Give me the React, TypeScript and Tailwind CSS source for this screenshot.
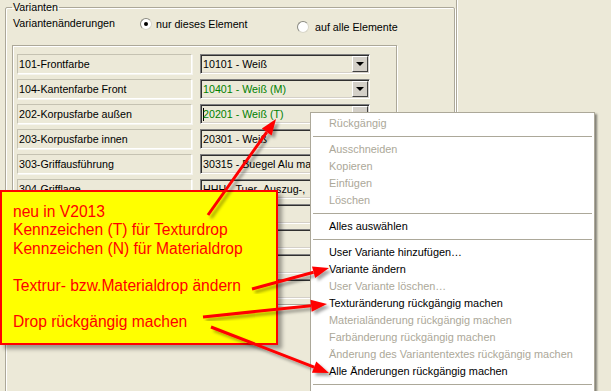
import React from "react";

type Row = { label: string; value: string; green?: boolean; caret?: boolean };

const ROWS: Row[] = [
  { label: "101-Frontfarbe", value: "10101 - Weiß" },
  { label: "104-Kantenfarbe Front", value: "10401 - Weiß (M)", green: true },
  { label: "202-Korpusfarbe außen", value: "20201 - Weiß (T)", green: true, caret: true },
  { label: "203-Korpusfarbe innen", value: "20301 - Weiß" },
  { label: "303-Griffausführung", value: "30315 - Buegel Alu ma" },
  { label: "304-Grifflage", value: "HHH - Tuer- Auszug-," },
  { label: "", value: "" },
  { label: "", value: "" },
  { label: "", value: "" },
  { label: "", value: "" },
];

// null = separator
const MENU: ({ text: string; off?: boolean } | null)[] = [
  { text: "Rückgängig", off: true },
  null,
  { text: "Ausschneiden", off: true },
  { text: "Kopieren", off: true },
  { text: "Einfügen", off: true },
  { text: "Löschen", off: true },
  null,
  { text: "Alles auswählen" },
  null,
  { text: "User Variante hinzufügen…" },
  { text: "Variante ändern" },
  { text: "User Variante löschen…", off: true },
  { text: "Texturänderung rückgängig machen" },
  { text: "Materialänderung rückgängig machen", off: true },
  { text: "Farbänderung rückgängig machen", off: true },
  { text: "Änderung des Variantentextes rückgängig machen", off: true },
  { text: "Alle Änderungen rückgängig machen" },
  null,
];

const ARROWS = [
  [208, 215, 276, 119],
  [252, 289, 329, 268],
  [203, 317, 327, 304],
  [211, 327, 329, 373],
];

function Radio({ checked }: { checked?: boolean }) {
  return (
    <span className="flex h-[12px] w-[12px] shrink-0 items-center justify-center rounded-full border border-[#8a8a80] border-b-[#d8d6c8] border-r-[#d8d6c8] bg-white">
      {checked && <span className="h-[4px] w-[4px] rounded-full bg-black" />}
    </span>
  );
}

function Combo({ row }: { row: Row }) {
  return (
    <div className="flex h-[20px] w-[170px] border border-[#808080] border-b-white border-r-white shadow-[inset_1px_1px_0_#303030,inset_-1px_-1px_0_#d4d0c8]">
      <div
        className={
          "flex flex-1 items-center overflow-hidden whitespace-nowrap pl-[2px] " +
          (row.green ? "text-[#008000]" : "text-black")
        }
      >
        {row.caret && <span className="mr-[-1px] h-[13px] w-px bg-black" />}
        {row.value}
      </div>
      <div className="my-px mr-px flex w-[16px] items-center justify-center border border-white border-b-[#404040] border-r-[#404040] bg-[#d4d0c8]">
        <span className="h-0 w-0 border-x-[4px] border-t-[4px] border-x-transparent border-t-black" />
      </div>
    </div>
  );
}

function Arrow({ a }: { a: number[] }) {
  const [x1, y1, x2, y2] = a;
  const ang = Math.atan2(y2 - y1, x2 - x1);
  const len = 16;
  const half = 6;
  const bx = x2 - len * Math.cos(ang);
  const by = y2 - len * Math.sin(ang);
  const px = -Math.sin(ang) * half;
  const py = Math.cos(ang) * half;
  return (
    <g filter="url(#shade)">
      <line x1={x1} y1={y1} x2={bx} y2={by} stroke="#ff0000" strokeWidth={3} />
      <polygon
        points={`${x2},${y2} ${bx + px},${by + py} ${bx - px},${by - py}`}
        fill="#ff0000"
      />
    </g>
  );
}

export default function App() {
  return (
    <div className="relative flex h-[391px] w-[611px] overflow-hidden bg-[#ece9d8] font-['Liberation_Sans',Arial,sans-serif] text-[10.7px] text-black">
      <div className="w-[456px] shrink-0">
        <fieldset className="ml-[5px] h-[420px] w-[450px] rounded-[2px] border border-[#aca899] px-[6px] shadow-[inset_1px_1px_0_#fff,1px_1px_0_#fff]">
          <legend className="px-[1px] leading-[14px]">Varianten</legend>
          <div className="mt-[2px] flex h-[17px] items-start leading-[14px]">
            <span className="w-[128px] pl-[1px]">Variantenänderungen</span>
            <label className="flex w-[157px] items-center gap-[4px] pt-[1px]">
              <Radio checked />
              <span>nur dieses Element</span>
            </label>
            <label className="mt-[3px] flex items-center gap-[6px] pt-[1px]">
              <Radio />
              <span>auf alle Elemente</span>
            </label>
          </div>

          <div className="mt-[12px] w-[385px] border border-[#aca899] px-[4px] pb-[5px] pt-[8px] shadow-[inset_1px_1px_0_#fff,1px_1px_0_#fff]">
            <div className="flex flex-col gap-[5px]">
              {ROWS.map((row, i) => (
                <div key={i} className="flex items-center gap-[8px]">
                  <div className="flex h-[20px] w-[175px] items-center border border-[#c5c2b2] border-b-white border-r-white pl-[1px] shadow-[1px_1px_0_#f6f5ef]">
                    {row.label}
                  </div>
                  <Combo row={row} />
                </div>
              ))}
            </div>
          </div>
        </fieldset>
      </div>
      <div className="flex-1 border-l border-[#aca899] shadow-[inset_1px_0_0_#fff]" />

      {/* context menu */}
      <div className="absolute left-[310px] top-[112px] h-[290px] w-[285px] border border-[#aca899] bg-white pt-[2px] shadow-[2px_2px_2px_rgba(0,0,0,0.45)]">
        {MENU.map((m, i) =>
          m === null ? (
            <div key={i} className="px-[2px] py-[4px]">
              <div className="h-px bg-[#aca899]" />
            </div>
          ) : (
            <div
              key={i}
              className={
                "flex h-[17px] items-center whitespace-nowrap pl-[18px] text-[10.9px] " +
                (m.off ? "text-[#aca899]" : "text-black")
              }
            >
              {m.text}
            </div>
          )
        )}
      </div>

      {/* yellow note */}
      <div className="absolute left-0 top-[190px] h-[155px] w-[278px] border-2 border-[#ff0000] bg-[#ffff00] pl-[11px] pt-[11px] text-[15.6px] leading-[18.4px] text-[#ff0000] shadow-[4px_4px_4px_rgba(0,0,0,0.35)]">
        <div>neu in V2013</div>
        <div>Kennzeichen (T) für Texturdrop</div>
        <div>Kennzeichen (N) für Materialdrop</div>
        <div>&nbsp;</div>
        <div>Textrur- bzw.Materialdrop ändern</div>
        <div>&nbsp;</div>
        <div>Drop rückgängig machen</div>
      </div>

      <svg className="pointer-events-none absolute left-0 top-0" width={611} height={391}>
        <defs>
          <filter id="shade" x="-20%" y="-20%" width="140%" height="140%">
            <feDropShadow dx="3" dy="3" stdDeviation="1.5" floodColor="#000" floodOpacity="0.35" />
          </filter>
        </defs>
        {ARROWS.map((a, i) => (
          <Arrow key={i} a={a} />
        ))}
      </svg>
    </div>
  );
}
